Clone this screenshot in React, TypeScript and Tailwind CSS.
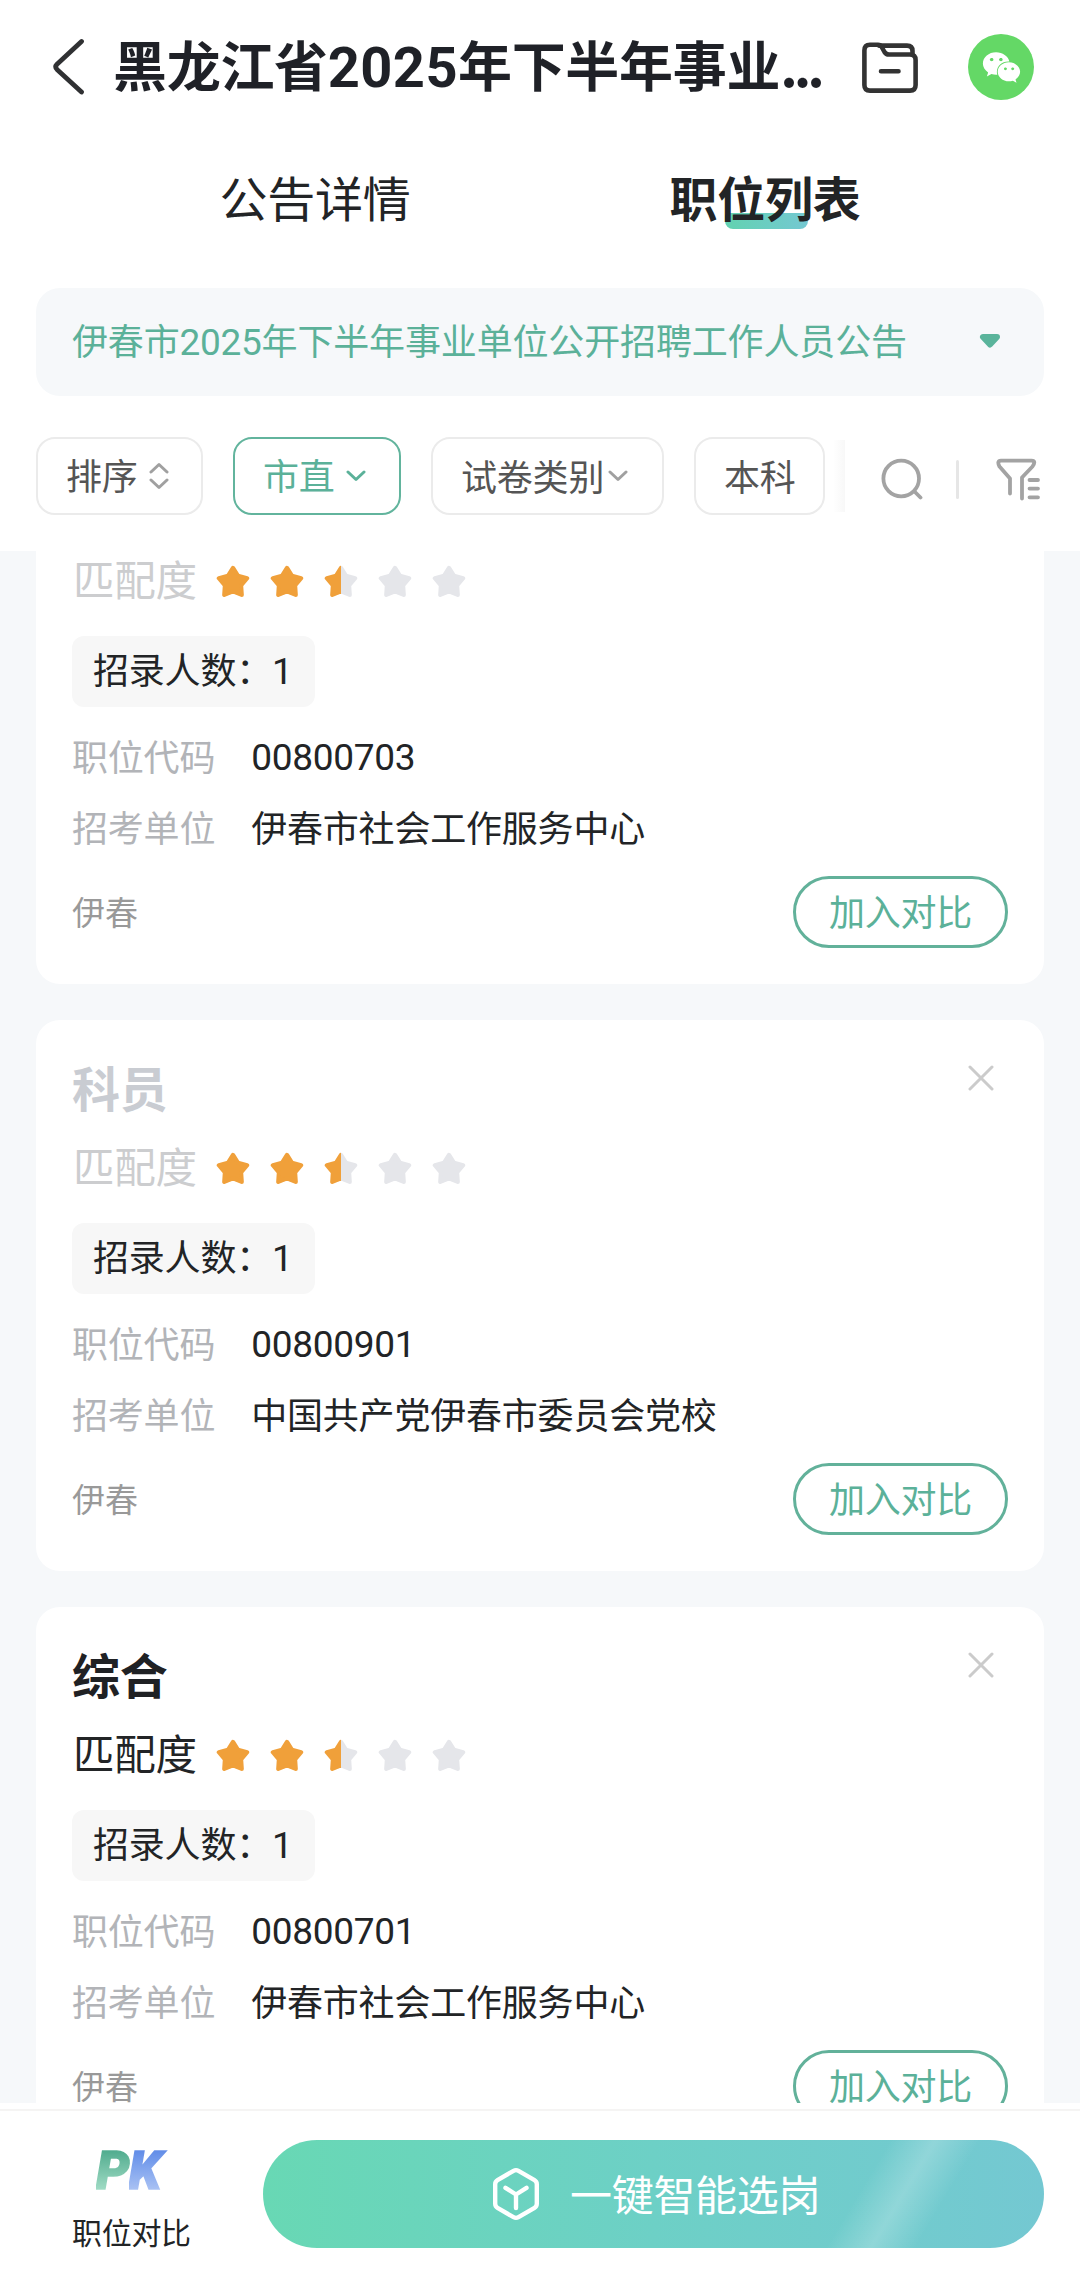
import React from 'react';
import { FaWeixin } from 'react-icons/fa';

const FONT = "font-['Noto_Sans_CJK_SC','Noto_Sans',sans-serif]";
const DIGITS = "font-['Roboto','Noto_Sans_CJK_SC',sans-serif]";
const TEAL = "text-[#5bb199]";

const jobs = [
  { id: 1, title: '', viewed: true, stars: 2.5, count: 1, code: '00800703', unit: '伊春市社会工作服务中心', city: '伊春' },
  { id: 2, title: '科员', viewed: true, stars: 2.5, count: 1, code: '00800901', unit: '中国共产党伊春市委员会党校', city: '伊春' },
  { id: 3, title: '综合', viewed: false, stars: 2.5, count: 1, code: '00800701', unit: '伊春市社会工作服务中心', city: '伊春' },
];

const STAR = "M17 4L21.7 11.5L30.3 13.7L24.6 20.5L25.2 29.3L17 26L8.8 29.3L9.4 20.5L3.7 13.7L12.3 11.5Z";

const Star = ({ fill }: { fill: number }) => {
  const color = fill >= 1 ? '#f0a03a' : fill > 0 ? 'url(#half-star)' : '#e5e6ea';
  return (
    <svg viewBox="1 1.5 32 30.5" className="w-[34px] h-[33px]">
      <defs>
        <linearGradient id="half-star" gradientUnits="userSpaceOnUse" x1="0" y1="0" x2="34" y2="0">
          <stop offset="0.5" stopColor="#f0a03a" />
          <stop offset="0.5" stopColor="#e5e6ea" />
        </linearGradient>
      </defs>
      <path d={STAR} fill={color} stroke={color} strokeWidth="4" strokeLinejoin="round" />
    </svg>
  );
};

const ChevronDown = ({ className }: { className?: string }) => (
  <svg viewBox="0 0 20 12" fill="none" stroke="currentColor" strokeWidth="3" strokeLinecap="round" strokeLinejoin="round" className={`w-5 h-3 ${className || ''}`}>
    <path d="M2 2L10 9.5L18 2" />
  </svg>
);

const Header = () => (
  <div className="flex items-center h-[134px] pl-[52px] pr-[46px]">
    <svg viewBox="0 0 34 58" fill="none" stroke="#303133" strokeWidth="4.8" strokeLinecap="round" strokeLinejoin="round" className="w-[34px] h-[58px]">
      <path d="M29.5 3.5L5 26.2Q2.5 28.8 5 31.4L29.5 54" />
    </svg>
    <h1 className="ml-[27px] pb-[3px] text-[54px] leading-[60px] tracking-[-0.3px] font-bold text-[#1f2127] whitespace-nowrap">
      黑龙江省<span className={`${DIGITS} text-[56px] tracking-[0.4px]`}>2025</span>年下半年事业<span className="tracking-[-4px]">...</span>
    </h1>
    <svg viewBox="0 0 56 52" fill="none" stroke="#333" strokeWidth="4.6" strokeLinecap="round" strokeLinejoin="round" className="ml-auto mt-px w-[56px] h-[52px]">
      <path d="M8 2.8H16Q18.5 2.8 19.7 5L22.5 10Q24 12.5 27 12.5H48Q53.6 12.5 53.6 18V43Q53.6 48.6 48 48.6H8Q2.4 48.6 2.4 43V8.5Q2.4 2.8 8 2.8Z" />
      <path d="M17 3.6H45Q50.5 3.6 50.5 9V13M19 29.3H36.5" />
    </svg>
    <div className="ml-[50px] flex items-center justify-center size-[66px] rounded-full bg-[#64d866]">
      <FaWeixin className="text-white" size={39} />
    </div>
  </div>
);

const Tabs = () => (
  <div className="flex px-[90px] h-[124px] text-[48px] leading-[60px] tracking-[-0.3px] text-[#222426]">
    <div className="flex flex-1 items-center justify-center">公告详情</div>
    <div className="flex flex-1 items-center justify-center">
      <div className="relative font-bold">
        <div className="absolute left-[55px] top-[47px] w-[83px] h-[16px] rounded-b-lg rounded-t-sm bg-linear-to-r from-[#62d2b0] to-[#74c8d2]"></div>
        <span className="relative">职位列表</span>
      </div>
    </div>
  </div>
);

const Filters = () => (
  <div className="mt-[41px] flex items-center px-9 h-[78px] text-[36px] leading-[50px] tracking-[-0.2px] text-[#555]">
    <div className="flex items-center h-[78px] w-[167px] pl-7 border-2 border-[#ebebeb] rounded-[19px]">
      <span className="pb-[5px]">排序</span>
      <svg viewBox="0 0 20 28" fill="none" stroke="#a0a0a0" strokeWidth="3" strokeLinecap="round" strokeLinejoin="round" className="ml-[11px] w-5 h-7">
        <path d="M2 10L10 2.5L18 10M2 18L10 25.5L18 18" />
      </svg>
    </div>
    <div className={`ml-[30px] flex items-center h-[78px] w-[168px] pl-7 border-2 border-[#62b49d] rounded-[19px] ${TEAL}`}>
      <span className="pb-[5px]">市直</span>
      <ChevronDown className="ml-[11px]" />
    </div>
    <div className="ml-[30px] flex items-center h-[78px] w-[233px] pl-7 border-2 border-[#ebebeb] rounded-[19px]">
      <span className="pb-[2px]">试卷类别</span>
      <ChevronDown className="ml-1 text-[#a0a0a0]" />
    </div>
    <div className="ml-[30px] flex items-center h-[78px] w-[131px] pl-7 border-2 border-[#ebebeb] rounded-[19px]">
      <span className="pb-[2px]">本科</span>
    </div>
    <div className="ml-2 w-3 h-[72px] bg-linear-to-r from-white to-[#f8f8f8]"></div>
    <div className="ml-[36px] mt-[6px] flex items-center">
      <svg viewBox="0 0 42 42" fill="none" stroke="#a3a3a3" strokeWidth="3.8" strokeLinecap="round" className="w-[42px] h-[42px]">
        <circle cx="20.2" cy="20.5" r="17.8" />
        <path d="M33.5 33.5L39.5 39.5" />
      </svg>
      <div className="ml-[33px] w-[3px] h-[39px] bg-[#e6e6e6] rounded-full"></div>
      <svg viewBox="0 0 44 43" fill="none" stroke="#a3a3a3" strokeWidth="3.8" strokeLinecap="round" strokeLinejoin="round" className="ml-[37px] w-[44px] h-[43px] shrink-0">
        <path d="M14 35.5V20.5L3.5 8.5Q0.5 2.8 5 2.6H35.5Q40.5 2.8 36.5 8.5L26 19.5V40.5" />
        <path d="M33.5 22H42M33.5 30.6H42M33.5 39.3H42" />
      </svg>
    </div>
  </div>
);

const JobCard = ({ job }: any) => (
  <div className="h-[551px] px-9 pt-9 bg-white rounded-3xl">
    <div className="flex justify-between">
      <h2 className={`h-[60px] text-[48px] leading-[60px] tracking-[-0.3px] font-bold ${job.viewed ? 'text-[#c9ccd2]' : 'text-[#1f2124]'}`}>{job.title}</h2>
      <svg viewBox="0 0 26 26" fill="none" stroke="#cbcbcb" strokeWidth="3" strokeLinecap="round" className="mt-[9px] mr-[14px] w-[26px] h-[26px]">
        <path d="M2 2L24 24M24 2L2 24" />
      </svg>
    </div>
    <div className="mt-[22px] flex items-center h-[60px]">
      <span className={`w-[126px] pl-px pb-[7px] text-[41.5px] leading-[48px] tracking-[-0.3px] ${job.viewed ? 'text-[#cccdcf]' : 'text-[#222426]'}`}>匹配度</span>
      <div className="ml-[18px] flex gap-5">
        {[0, 1, 2, 3, 4].map((i) => <Star key={i} fill={job.stars - i} />)}
      </div>
    </div>
    <div className="mt-[25px] w-[243px] h-[71px] px-[21px] pb-[3px] flex items-center bg-[#f7f7f7] rounded-xl text-[36px] leading-[50px] tracking-[-0.2px] text-[#222426] whitespace-nowrap">
      <p>招录人数：<span className={`${DIGITS} text-[37px]`}>{job.count}</span></p>
    </div>
    <div className="mt-[13px] text-[36px] leading-[71px] tracking-[-0.2px] text-[#222426]">
      <div className="flex h-[71px] gap-9">
        <span className="text-[#b2b4b8]">职位代码</span>
        <span className={`${DIGITS} pt-[2px] text-[37px] tracking-[-0.3px]`}>{job.code}</span>
      </div>
      <div className="flex h-[71px] gap-9">
        <span className="text-[#b2b4b8]">招考单位</span>
        <span>{job.unit}</span>
      </div>
    </div>
    <div className="mt-[14px] flex items-center justify-between">
      <span className="pb-[3px] text-[33px] leading-[50px] text-[#999]">{job.city}</span>
      <button className={`flex items-center justify-center w-[215px] h-[72px] pb-1 border-[3px] border-[#62b19a] rounded-full text-[36px] leading-[50px] tracking-[-0.2px] ${TEAL}`}>
        加入对比
      </button>
    </div>
  </div>
);

const BottomBar = () => (
  <div className="flex h-[169px] pt-[29px] pl-[72px] pr-9 bg-white border-t-2 border-[#f5f4f3]">
    <div className="w-[120px]">
      <div className="mt-[3px] ml-[24px] h-[56px] flex font-['Roboto',sans-serif] text-[53px] leading-[56px] font-black italic [-webkit-text-stroke:1.5px_transparent]">
        <span className="bg-linear-to-b from-[#52ad90] from-15% to-[#a6e0ca] to-90% bg-clip-text text-transparent">P</span>
        <span className="-ml-px pr-2 bg-linear-to-b from-[#638ee8] from-15% to-[#b0c6f4] to-90% bg-clip-text text-transparent">K</span>
      </div>
      <div className="mt-[12px] text-[30px] leading-[40px] tracking-[-0.3px] text-[#222426]">职位对比</div>
    </div>
    <button className="relative overflow-hidden ml-[71px] w-[781px] h-[108px] rounded-full flex items-center justify-start pl-[229px] bg-linear-to-r from-[#68d8b4] via-[#6dd0c6] to-[#74c8d2] text-white">
      <div className="absolute left-[595px] top-0 w-[90px] h-[108px] -skew-x-[31deg] bg-linear-to-r from-white/0 via-white/22 to-white/0"></div>
      <svg viewBox="0 0 48 54" fill="none" stroke="white" strokeWidth="4.4" strokeLinecap="round" strokeLinejoin="round" className="w-[48px] h-[54px]">
        <path d="M21.5 3.8Q24 2.4 26.5 3.8L42.5 13.2Q44.8 14.6 44.8 17.2V36.8Q44.8 39.4 42.5 40.8L26.5 50.2Q24 51.6 21.5 50.2L5.5 40.8Q3.2 39.4 3.2 36.8V17.2Q3.2 14.6 5.5 13.2Z" />
        <path d="M13.5 20.8L24 27.5L34.5 20.8M24 27.5V41" />
      </svg>
      <span className="ml-[30px] pb-[3px] text-[42px] leading-[50px] tracking-[-0.3px]">一键智能选岗</span>
    </button>
  </div>
);

export default function App() {
  return (
    <div className={`w-[1080px] h-[2278px] flex flex-col overflow-hidden bg-white ${FONT}`}>
      <div className="relative h-[551px] shrink-0 bg-white">
        <Header />
        <Tabs />
        <div className="mx-9 mt-[30px] h-[108px] pl-9 pr-[43px] pb-[2px] flex items-center justify-between bg-[#f6f8fa] rounded-3xl">
          <span className={`text-[36px] leading-[50px] tracking-[-0.15px] ${TEAL}`}>
            伊春市<span className={`${DIGITS} text-[37px] tracking-[-0.3px]`}>2025</span>年下半年事业单位公开招聘工作人员公告
          </span>
          <svg viewBox="0 0 22 14" className="w-[22px] h-[14px]">
            <path d="M4 3H18L11 10.5Z" fill="#5ab49b" stroke="#5ab49b" strokeWidth="6" strokeLinejoin="round" />
          </svg>
        </div>
        <Filters />
      </div>
      <div className="h-[1552px] shrink-0 overflow-hidden px-9 bg-[#f6f8fa]">
        <div className="-mt-[118px] flex flex-col gap-9">
          {jobs.map((job) => <JobCard key={job.id} job={job} />)}
        </div>
      </div>
      <div className="mt-[6px]">
        <BottomBar />
      </div>
    </div>
  );
}
